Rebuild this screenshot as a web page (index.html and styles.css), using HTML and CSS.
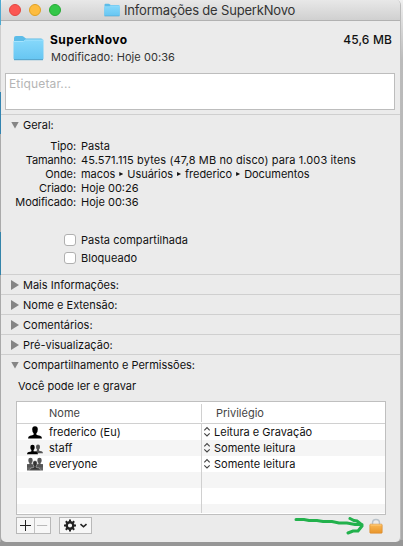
FILE: index.html
```html
<!DOCTYPE html>
<html lang="pt-BR">
<head>
<meta charset="utf-8">
<title>Informações de SuperkNovo</title>
<link rel="stylesheet" href="styles.css">
</head>
<body>
<svg class="defs" width="0" height="0">
  <defs>
    <linearGradient id="blue" x1="0" y1="0" x2="0" y2="1"><stop offset="0" stop-color="#86d8fb"/><stop offset="1" stop-color="#67c6f2"/></linearGradient>
    <linearGradient id="gold" x1="0" y1="0" x2="0" y2="1"><stop offset="0" stop-color="#fbb955"/><stop offset="1" stop-color="#e8952b"/></linearGradient>
    <symbol id="folder" viewBox="0 0 31 26"><path d="M1 3q0-2 2-2h6q1 0 2 1l2 1.500h15q2 0 2 2V23H1z" fill="#5cbce8"/><path d="M.5 6.500h10l2-1.500h18v18.500q0 1-1 1h-28q-1 0-1-1z" fill="url(#blue)"/><path d="M.5 6.500h10l2-1.500h18" fill="none" stroke="#a5e4fd"/><path d="M1 24.700h29" stroke="#459dc8"/></symbol>
    <symbol id="stepper" viewBox="0 0 8 12"><path d="M1.300 4.300 4 1.600l2.700 2.700M1.300 7.300 4 10l2.700-2.700" fill="none" stroke="#444" stroke-width="1.100"/></symbol>
    <symbol id="person" viewBox="0 0 14 13"><path d="M4.200 3.200Q4.200.3 7 .3t2.800 2.900Q9.800 6 8.400 7.200v1.500q1 .6 3.600 1 2 .4 2 2.800H0q0-2.400 2-2.800 2.600-.4 3.600-1V7.200Q4.200 6 4.200 3.200z"/></symbol>
  </defs>
</svg>
<main class="window">
  <header class="titlebar">
    <div class="lights"><i class="red"></i><i class="yellow"></i><i class="green"></i></div>
    <svg class="title-folder"><use href="#folder"/></svg>
    <h1><span>Informações de SuperkNovo</span></h1>
  </header>
  <section class="summary">
    <svg class="big-folder"><use href="#folder"/></svg>
    <div class="summary-text"><h2>SuperkNovo</h2><p>Modificado: Hoje 00:36</p></div>
    <strong class="size">45,6 MB</strong>
  </section>
  <div class="tags">Etiquetar...</div>
  <section class="panel general">
    <h3><i class="tri open"></i><span>Geral:</span></h3>
    <dl>
      <dt>Tipo:</dt><dd>Pasta</dd>
      <dt>Tamanho:</dt><dd class="bytes">45.571.115 bytes (47,8 MB no disco) para 1.003 itens</dd>
      <dt>Onde:</dt><dd class="path">macos <i></i> Usuários <i></i> frederico <i></i> Documentos</dd>
      <dt>Criado:</dt><dd>Hoje 00:26</dd>
      <dt>Modificado:</dt><dd>Hoje 00:36</dd>
    </dl>
    <div class="checks"><label><b></b>Pasta compartilhada</label><label><b></b>Bloqueado</label></div>
  </section>
  <section class="panel"><h3><i class="tri"></i><span>Mais Informações:</span></h3></section>
  <section class="panel"><h3><i class="tri"></i><span>Nome e Extensão:</span></h3></section>
  <section class="panel"><h3><i class="tri"></i><span>Comentários:</span></h3></section>
  <section class="panel"><h3><i class="tri"></i><span>Pré-visualização:</span></h3></section>
  <section class="panel sharing">
    <h3><i class="tri open"></i><span>Compartilhamento e Permissões:</span></h3>
    <p class="access">Você pode ler e gravar</p>
    <div class="table">
      <div class="row head"><span class="name">Nome</span><span class="priv">Privilégio</span></div>
      <div class="row"><span class="name"><svg viewBox="0 0 16 14"><use href="#person" x="1" y="1" width="14" height="13"/></svg>frederico (Eu)</span><span class="priv"><svg><use href="#stepper"/></svg>Leitura e Gravação</span></div>
      <div class="row"><span class="name"><svg viewBox="0 0 16 14"><use href="#person" x="6" y="3" width="10" height="10" fill="#555"/><use href="#person" x="0" y="3" width="11" height="11"/></svg>staff</span><span class="priv"><svg><use href="#stepper"/></svg>Somente leitura</span></div>
      <div class="row"><span class="name"><svg viewBox="0 0 16 14"><path d="M0 7h16v6.500H0z" fill="#666"/><use href="#person" x="-2" y="0" width="11" height="11" fill="#555"/><use href="#person" x="7" y="0" width="11" height="11" fill="#555"/><use href="#person" x="2.500" y="3" width="11" height="11" fill="#333" stroke="#ccc" stroke-width=".7"/></svg>everyone</span><span class="priv"><svg><use href="#stepper"/></svg>Somente leitura</span></div>
      <div class="row"><span class="name"></span><span class="priv"></span></div>
      <div class="row"><span class="name"></span><span class="priv"></span></div>
      <div class="row last"><span class="name"></span><span class="priv"></span></div>
    </div>
    <footer>
      <div class="pair">
        <svg viewBox="0 0 17 15"><path d="M3 7.500h11M8.500 2v11" stroke="#222" fill="none"/></svg>
        <svg viewBox="0 0 16 15"><path d="M2 7.500h11" stroke="#b4b4b4" fill="none"/></svg>
      </div>
      <svg class="gear" viewBox="0 0 33 17"><g fill="none" stroke="#222"><circle cx="11" cy="8.500" r="3.300" stroke-width="2.400"/><path d="M11 2.500v2M11 12.500v2M5 8.500h2M15 8.500h2M6.760 4.260l1.400 1.400M13.840 11.340l1.400 1.400M6.760 12.740l1.400-1.400M13.840 5.660l1.400-1.400" stroke-width="2"/><path d="m21.500 7.200 3 2.600 3-2.600" stroke-width="1.600"/></g></svg>
      <svg class="arrow" viewBox="0 0 72 18"><path d="M2 2.500h8l5 1h8l6 1h9l7 1.500h8l8 1.500h7M56 1.500l4 2 3 .5 5 4M54 16l5-2h5l4-5" fill="none" stroke="#22b14c" stroke-width="3" stroke-linecap="round"/></svg>
      <svg class="lock" viewBox="0 0 14 16"><path d="M3.500 8V5Q3.500 1.500 7 1.500T10.500 5v3" fill="none" stroke="#b9c2ca" stroke-width="1.500"/><rect x=".8" y="6.200" width="12.400" height="9" rx=".8" fill="url(#gold)" stroke="#d8892e" stroke-width=".6"/><path d="M1.500 7h11" stroke="#ffd38c" stroke-width=".8"/></svg>
    </footer>
  </section>
</main>
</body>
</html>
```
FILE: styles.css
```css
* { box-sizing: border-box; margin: 0; padding: 0; }
html { background: #aaa; }
body { width: 403px; height: 546px; overflow: hidden; padding: 0 2px 0 1px; font: 11px/14px Inter, "Liberation Sans", sans-serif; color: #111; background: linear-gradient(#4da9d0 0 25px, #ccc 25px 92px, #3484b0 92px 134px, #aaa 134px 232px, #3484aa 232px 275px, #aaa 275px) 0 0 / 1px 542px no-repeat, linear-gradient(#f0f0f0, #bbb 60px, #aaa 540px, #969696 540px); }
svg { display: block; flex: none; }
.defs { position: absolute; }
i { font-style: normal; }
.window { display: flex; flex-direction: column; height: 542px; background: #ebebeb; border-right: 1px solid #bbb; border-radius: 5px; overflow: hidden; }
.titlebar { display: flex; align-items: center; height: 21px; flex: none; padding-left: 8px; background: linear-gradient(#e8e8e8, #d0d0d0); border-bottom: 1px solid #b1b1b1; }
.lights { display: flex; gap: 8px; width: 95px; }
.lights i { width: 12px; height: 12px; border-radius: 50%; }
.red { background: #fc5753; border: 1px solid #e2463f; }
.yellow { background: #fdbc40; border: 1px solid #dfa023; }
.green { background: #33c748; border: 1px solid #27aa35; }
.title-folder { width: 16px; height: 14px; }
h1 { font-size: 13px; font-weight: 400; color: #333; margin-left: 4px; white-space: nowrap; letter-spacing: -.18px; }
.summary { display: flex; height: 52px; flex: none; padding: 11px 8px 0 12px; }
.big-folder { width: 31px; height: 26px; margin-top: 3px; }
.summary-text { margin-left: 7px; flex: 1; }
h2 { font-size: 12px; line-height: 15px; font-weight: 700; color: #000; letter-spacing: .5px; margin-left: -1px; }
.summary p { color: #333; margin-top: 3px; letter-spacing: .07px; }
.size { font-size: 12px; line-height: 16px; font-weight: 500; letter-spacing: .14px; }
.tags { height: 37px; flex: none; margin: 0 5px 4px 4px; padding: 3px; border: 1px solid #bdbdbd; background: #fff; color: #b5b5b5; font-size: 12px; letter-spacing: .15px; }
.panel { flex: none; height: 20px; border-top: 1px solid #cfcfcf; }
.general { height: 160px; }
.sharing { height: 188px; }
h3 { display: flex; align-items: center; height: 20px; font-size: 11px; font-weight: 400; padding-left: 10px; }
h3 span { margin-left: 4px; }
.tri { width: 8px; height: 10px; background: #858585; clip-path: polygon(0 0, 100% 50%, 0 100%); }
.tri.open { height: 7px; clip-path: polygon(0 0, 100% 0, 50% 100%); }
dl { display: grid; grid-template-columns: 75px 1fr; column-gap: 5px; grid-auto-rows: 14px; margin-top: 4px; white-space: nowrap; }
dt { text-align: right; letter-spacing: -.1px; }
.bytes { letter-spacing: .11px; }
.path { letter-spacing: -.05px; }
.path i { display: inline-block; width: 4px; height: 4px; margin: 0 1px 2px; background: #111; clip-path: polygon(0 0, 100% 50%, 0 100%); }
.checks { display: grid; grid-auto-rows: 18px; margin: 22px 0 0 63px; }
label { display: flex; align-items: center; gap: 5px; letter-spacing: .04px; }
label b { width: 12px; height: 12px; background: #fff; border: 1px solid #b0b0b0; border-radius: 3px; }
.access { margin: 4px 0 0 17px; }
.table { height: 114px; width: 370px; margin: 8px 0 0 15px; border: 1px solid #bfbfbf; background: #fff; overflow: hidden; }
.row { display: grid; grid-template-columns: 185px 1fr; height: 16px; }
.row:nth-child(odd):not(.head) { background: #f5f5f5; }
.row.head { height: 22px; border-bottom: 1px solid #d0d0d0; color: #444; align-items: center; }
.row span { display: flex; align-items: center; white-space: nowrap; }
.row .name { border-right: 1px solid #d0d0d0; }
.name svg { width: 16px; height: 14px; margin: 0 6px 0 10px; }
.head .name { height: 18px; padding-left: 32px; }
.priv svg { width: 8px; height: 12px; margin: 0 3px 0 1px; }
.head .priv { padding-left: 14px; }
.last { height: 9px; }
footer { display: flex; margin: 2px 0 0 15px; }
.pair { display: flex; width: 35px; height: 17px; background: #f7f7f7; border: 1px solid #b8b8b8; }
.pair svg { width: 17px; height: 15px; }
.pair svg:last-child { width: 16px; border-left: 1px solid #c2c2c2; }
.gear { width: 33px; height: 17px; margin-left: 8px; background: #f7f7f7; outline: 1px solid #b8b8b8; outline-offset: -1px; }
.arrow { width: 72px; height: 18px; margin-left: 202px; }
.lock { width: 14px; height: 16px; margin: 1px 0 0 3px; }
```
